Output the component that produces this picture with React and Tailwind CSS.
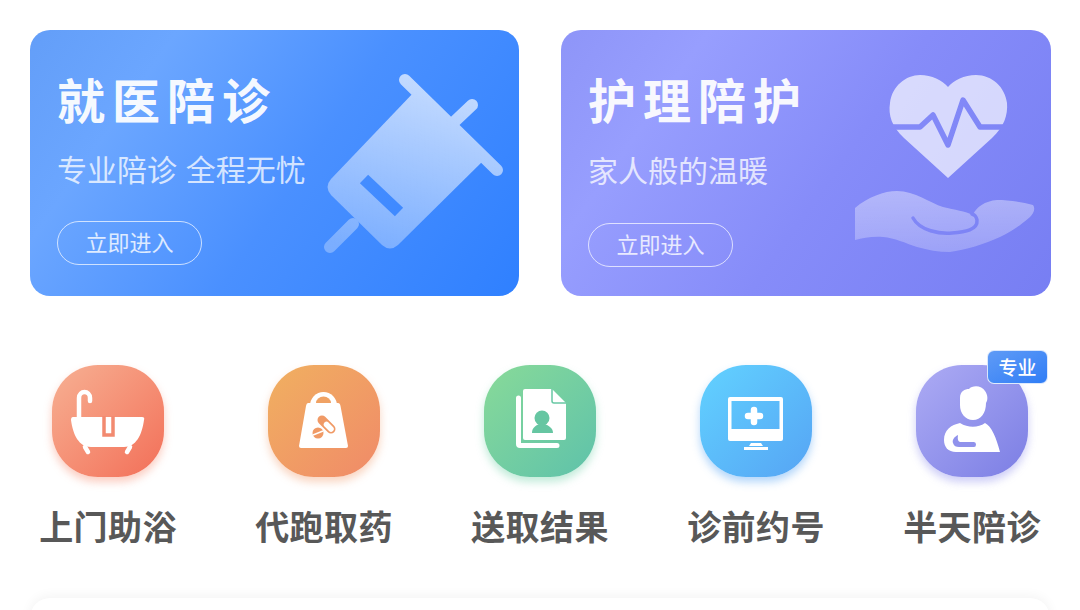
import React from 'react';

function SyringeArt() {
  return (
    <svg viewBox="320 70 190 190" className="w-[190px] h-[190px] shrink-0 ml-auto mt-10 mr-[9px]">
      <defs>
        <linearGradient id="syringeFill" x1="0.7" y1="0" x2="0.3" y2="1">
          <stop offset="0" stopColor="#fff" stopOpacity="0.72" />
          <stop offset="1" stopColor="#fff" stopOpacity="0.3" />
        </linearGradient>
        <mask id="syringeMask" maskUnits="userSpaceOnUse" x="320" y="70" width="190" height="190">
          <path d="M330 247 L353 224 M453 123 L472 105 M405 80 L497 170" stroke="#fff" strokeWidth="12" strokeLinecap="round" fill="none" />
          <path d="M416 90 L486 158 L398 245 Q390 252 382 245 L331 195 Q324 187 331 179 Z" fill="#fff" />
          <path d="M364 179 L399 212" stroke="#000" strokeWidth="12" fill="none" />
        </mask>
      </defs>
      <rect x="320" y="70" width="190" height="190" fill="url(#syringeFill)" mask="url(#syringeMask)" />
    </svg>
  );
}

function HeartHandArt() {
  return (
    <svg viewBox="850 70 190 190" className="w-[190px] h-[190px] shrink-0 ml-auto mt-10 mr-[11px]">
      <defs>
        <linearGradient id="handFill" x1="0.5" y1="0" x2="0.5" y2="1">
          <stop offset="0" stopColor="#fff" stopOpacity="0.42" />
          <stop offset="1" stopColor="#fff" stopOpacity="0.22" />
        </linearGradient>
        <mask id="heartMask" maskUnits="userSpaceOnUse" x="850" y="70" width="190" height="190">
          <path d="M948 178 L904 138 C892 127 888 115 890 103 C892 86 906 75 920 75 C932 75 942 80 948 87 C954 80 964 75 976 75 C992 75 1005 87 1007 103 C1008 115 1004 127 992 138 Z" fill="#fff" />
          <path d="M880 127 H920 L933 115 L948 145 L963 100 L980 127 H1015" stroke="#000" strokeWidth="5.5" strokeLinejoin="round" fill="none" />
        </mask>
        <mask id="handMask" maskUnits="userSpaceOnUse" x="850" y="180" width="190" height="80">
          <path d="M855 208 C868 197 884 191 897 191 C915 191 930 203 943 207 C955 210 965 211 973 215 C976 207 985 201 997 200 C1008 200 1022 202 1033 205 C1036 209 1033 214 1030 217 C1020 226 1010 232 1000 237 C985 244 965 250 950 252 C938 252 928 250 917 247 C905 243 895 238 883 237 C873 236 863 238 855 240 Z" fill="#fff" />
          <path d="M913 218 C920 231 940 234 952 233 C965 232 978 230 977 220 C976 216 975 215 972 214" stroke="#000" strokeWidth="3.5" fill="none" strokeLinecap="round" />
        </mask>
      </defs>
      <rect x="850" y="70" width="190" height="110" fill="#fff" fillOpacity="0.68" mask="url(#heartMask)" />
      <rect x="850" y="180" width="190" height="80" fill="url(#handFill)" mask="url(#handMask)" />
    </svg>
  );
}

function BannerCard({ title, subtitle, subtitleClass, buttonClass, className, art }) {
  return (
    <div className={`h-[266px] rounded-[20px] flex overflow-hidden ${className}`}>
      <div className="pl-[27px] shrink-0">
        <div className="mt-[38px] text-[48px] leading-[60px] font-bold tracking-[7px] text-white/95 whitespace-nowrap">{title}</div>
        <div className={`text-[30px] leading-10 text-white/75 whitespace-nowrap [word-spacing:2px] ${subtitleClass}`}>{subtitle}</div>
        <div className={`w-[145px] h-11 pb-[3px] rounded-full border-[1.5px] border-white/70 flex items-center justify-center text-[22px] text-white/80 ${buttonClass}`}>立即进入</div>
      </div>
      {art}
    </div>
  );
}

function BathIcon() {
  return (
    <svg viewBox="0 0 112 112" className="w-28 h-28">
      <path d="M27 54 V33 C27 25 38 25 38 33 V36" stroke="#fff" strokeWidth="4.5" fill="none" strokeLinecap="round" />
      <path d="M21 52 H90 Q93 52 92 55 C90 70 84 82 72 82 H39 C27 82 21 70 19 55 Q19 52 21 52 Z" fill="#fff" />
      <path d="M33 82 L36 87 M78 82 L75 87" stroke="#fff" strokeWidth="4.5" strokeLinecap="round" />
      <path d="M52 51 V70 H61 V51" stroke="#f28a70" strokeWidth="3.5" fill="none" />
    </svg>
  );
}

function BagIcon() {
  return (
    <svg viewBox="0 0 112 112" className="w-28 h-28">
      <path d="M42 41 A13.500 14 0 0 1 69 41 Z" fill="#fff" />
      <path d="M40 38 H70 Q72 38 72.500 41 L80 81 Q80 83 78 83 H33 Q31 83 31 81 L38 41 Q38.500 38 40 38 Z" fill="#fff" />
      <path d="M48 38 A7.500 6.500 0 0 1 63 38 Z" fill="#f0a264" />
      <path d="M54 55 L63 64" stroke="#f09a66" strokeWidth="9" strokeLinecap="round" />
      <path d="M58.500 59.500 L63 64" stroke="#fff" strokeWidth="5.500" strokeLinecap="round" />
      <circle cx="50" cy="68" r="5.500" fill="#f09a66" />
      <path d="M45 70 L55 66" stroke="#fff" strokeWidth="1.500" />
    </svg>
  );
}

function FilesIcon() {
  return (
    <svg viewBox="0 0 112 112" className="w-28 h-28">
      <path d="M34.500 33 V79 Q34.500 80.500 36 80.500 H73" stroke="#fff" strokeWidth="5" fill="none" strokeLinecap="round" />
      <path d="M41 24 H68 L82 38 V73 Q82 75 80 75 H41 Q39 75 39 73 V26 Q39 24 41 24 Z" fill="#fff" />
      <path d="M68 24 V36 Q68 38 70 38 H82" stroke="#68c8a4" strokeWidth="1.500" fill="none" />
      <circle cx="58" cy="53" r="7.500" fill="#66c6a2" />
      <path d="M48 68 C48 63 51 61 55 59 H61 C65 61 69 63 69 68 Z" fill="#66c6a2" />
    </svg>
  );
}

function MonitorIcon() {
  return (
    <svg viewBox="0 0 112 112" className="w-28 h-28">
      <path d="M30 32 H81 Q83 32 83 34 V74 Q83 76 81 76 H30 Q28 76 28 74 V34 Q28 32 30 32 Z M31.500 36 V64 H79.500 V36 Z" fill="#fff" fillRule="evenodd" />
      <path d="M51 78 H61 L63 81 H49 Z" fill="#fff" />
      <rect x="44" y="82" width="24" height="3" fill="#fff" />
      <path d="M54 45 V57 M48 51 H60" stroke="#fff" strokeWidth="6.500" strokeLinecap="round" />
    </svg>
  );
}

function NurseIcon() {
  return (
    <svg viewBox="0 0 112 112" className="w-28 h-28">
      <path d="M44 33 C44 26 49 24 53 24 C56 20 66 20 69 26 C72 30 72 35 70 38 C70 48 65 55 57 55 C49 55 44 48 44 40 Z" fill="#fff" />
      <path d="M28 75 C28 65 35 60 44 58 C52 63 62 63 69 58 C76 62 80 72 84 87 H40 C32 87 28 82 28 75 Z" fill="#fff" />
      <path d="M42 70 C38 72 36 75 37 78 C38 81 40 82 43 82 H58 Q60 82 60 79.500 Q60 77 58 77 H44 Q41 76 42 70 Z" fill="#9092ec" />
    </svg>
  );
}

const services = [
  { label: '上门助浴', tile: 'bg-gradient-to-br from-[#f6b093] to-[#f26e58] shadow-[0_5px_9px_rgba(244,130,100,0.4)]', icon: <BathIcon /> },
  { label: '代跑取药', tile: 'bg-gradient-to-br from-[#f0b060] to-[#f08a68] shadow-[0_5px_9px_rgba(240,150,100,0.4)]', icon: <BagIcon /> },
  { label: '送取结果', tile: 'bg-gradient-to-br from-[#88da98] to-[#5ec2aa] shadow-[0_5px_9px_rgba(100,205,160,0.4)]', icon: <FilesIcon /> },
  { label: '诊前约号', tile: 'bg-gradient-to-br from-[#62d2ff] to-[#56a4f4] shadow-[0_5px_9px_rgba(86,165,245,0.45)]', icon: <MonitorIcon /> },
  { label: '半天陪诊', tile: 'bg-gradient-to-br from-[#adabf4] to-[#7c7ee4] shadow-[0_5px_9px_rgba(130,130,235,0.4)]', icon: <NurseIcon />, badge: '专业' },
];

export default function App() {
  return (
    <div className="w-[1080px] h-[610px] overflow-hidden bg-white font-['Noto_Sans_CJK_SC',sans-serif]">
      <div className="flex gap-[42px] pl-[30px] pt-[30px]">
        <BannerCard
          title="就医陪诊"
          subtitle="专业陪诊 全程无忧"
          subtitleClass="mt-5"
          buttonClass="mt-[33px]"
          className="w-[489px] bg-[linear-gradient(125deg,#639ef8_0%,#6ba6ff_22%,#4a90ff_55%,#2f80ff_100%)]"
          art={<SyringeArt />}
        />
        <BannerCard
          title="护理陪护"
          subtitle="家人般的温暖"
          subtitleClass="mt-[21px]"
          buttonClass="mt-[34px]"
          className="w-[490px] bg-[linear-gradient(125deg,#8e95f8_0%,#979efe_22%,#868cf9_55%,#777ef3_100%)]"
          art={<HeartHandArt />}
        />
      </div>

      <div className="grid grid-cols-5 mt-[69px]">
        {services.map((s) => (
          <div key={s.label} className="flex flex-col items-center">
            <div className={`relative w-28 h-28 rounded-[46px] ${s.tile}`}>
              {s.icon}
              {s.badge && (
                <div className="absolute left-[71px] -top-[15px] w-[61px] h-[34px] rounded-[7px] border border-white/80 bg-gradient-to-br from-[#5f9bf6] to-[#2f7df6] flex items-center justify-center text-[19px] font-medium text-white">
                  {s.badge}
                </div>
              )}
            </div>
            <div className="mt-[29px] text-[34px] leading-10 font-semibold tracking-[0.4px] text-[#585858]">{s.label}</div>
          </div>
        ))}
      </div>

      <div className="mx-[30px] mt-[52px] h-10 rounded-[20px] bg-white shadow-[0_-2px_12px_rgba(0,0,0,0.05)]" />
    </div>
  );
}
